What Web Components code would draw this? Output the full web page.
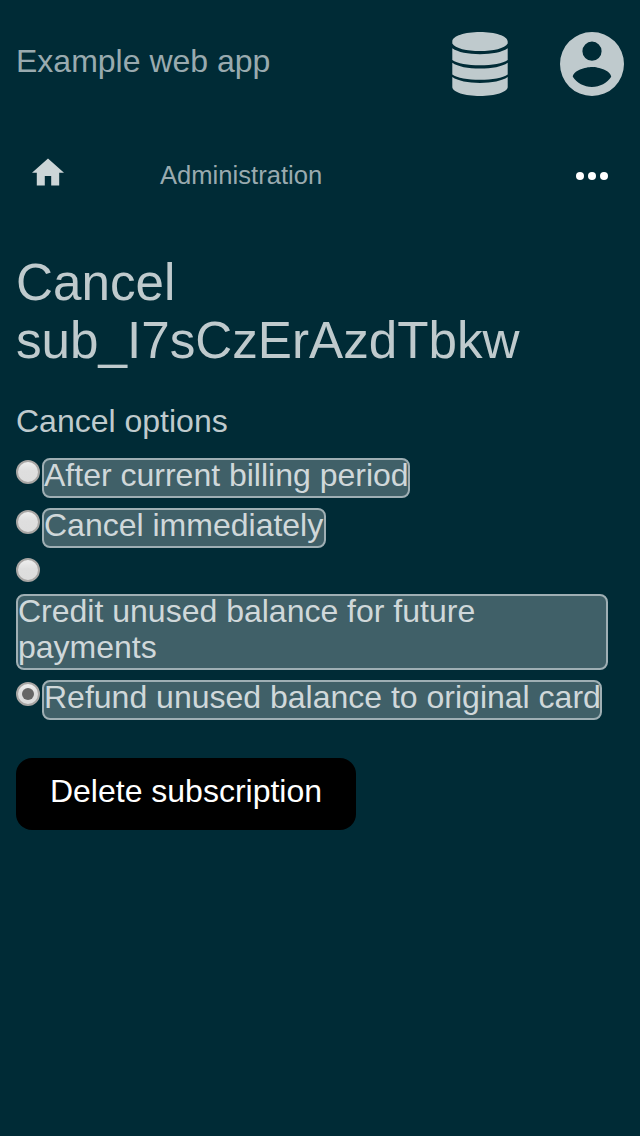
<!DOCTYPE html>
<html lang="en">
<head>
<meta charset="utf-8">
<title>Example web app</title>
<style>
body{margin:0;background:#002b36;color:#bfcacd;font-family:"Liberation Sans",Arial,sans-serif;font-size:32px;line-height:36px}
</style>
</head>
<body>
<app-page>
  <app-header slot="header">Example web app</app-header>
  <app-nav slot="nav">Administration</app-nav>
  <cancel-form>
    <span slot="title">Cancel sub_I7sCzErAzdTbkw</span>
    <span slot="legend">Cancel options</span>
    <radio-option style="--label-width:368px">After current billing period</radio-option>
    <radio-option style="--label-width:284px">Cancel immediately</radio-option>
    <radio-option stacked>Credit unused balance for future payments</radio-option>
    <radio-option checked style="--label-width:560px">Refund unused balance to original card</radio-option>
    <action-button slot="action">Delete subscription</action-button>
  </cancel-form>
</app-page>
<script>
const define = (name, html) => customElements.define(name, class extends HTMLElement {
  constructor() {
    super();
    this.attachShadow({mode: 'open'}).innerHTML = html;
  }
});

define('app-page', `
<style>:host{display:flex;flex-direction:column;min-height:1136px}</style>
<slot name="header"></slot><slot name="nav"></slot><main><slot></slot></main>`);

define('app-header', `
<style>
:host{display:flex;align-items:center;justify-content:space-between;height:128px;padding:0 16px;box-sizing:border-box}
.title{color:#99aaaf;padding-bottom:6px}
.icons{display:flex;gap:52px}
svg{display:block;fill:#bfcacd}
</style>
<span class="title"><slot></slot></span>
<div class="icons">
<svg width="56" height="64" viewBox="0 0 56 64"><path d="M28 0C43 0 55.7 4 55.7 9.5V11.5C53 16.5 41 19 28 19S3 16.5 .3 11.5V9.5C.3 4 13 0 28 0zM.3 16.3C6 20.3 16 22.2 28 22.2S50 20.3 55.7 16.3V28C51 31.5 40 33.3 28 33.3S5 31.5 .3 28zM.3 30.7C6 34.7 16 36.5 28 36.5S50 34.7 55.7 30.7V42.4C51 45.9 40 47.7 28 47.7S5 45.9 .3 42.4zM.3 45.1C6 49.1 16 50.9 28 50.9S50 49.1 55.7 45.1V55C55.7 60 43 64 28 64S.3 60 .3 55z"/></svg>
<svg width="64" height="64" viewBox="2 2 20 20"><path fill-rule="evenodd" d="M12 19.2C9.5 19.2 7.29 17.92 6 16C6.03 14 10 12.9 12 12.9C14 12.9 17.97 14 18 16C16.71 17.92 14.5 19.2 12 19.2M12 5A3 3 0 0 1 15 8A3 3 0 0 1 12 11A3 3 0 0 1 9 8A3 3 0 0 1 12 5M12 2A10 10 0 0 0 2 12A10 10 0 0 0 12 22A10 10 0 0 0 22 12A10 10 0 0 0 12 2Z"/></svg>
</div>`);

define('app-nav', `
<style>
:host{display:flex;align-items:center;height:96px;padding:0 32px;box-sizing:border-box;font-size:25.6px;color:#99aaaf}
svg{display:block}
span{padding-bottom:2px}
.home{margin:-8px 96px 0 0;fill:#ccd5d7}
.more{margin-left:auto;fill:#fff}
</style>
<svg class="home" width="32" height="28" viewBox="2 2.75 20 17.5"><path d="M10 20v-6h4v6h5v-8h3L12 3 2 12h3v8z"/></svg>
<span><slot></slot></span>
<svg class="more" width="32" height="8" viewBox="0 0 32 8"><circle cx="4" cy="4" r="4"/><circle cx="16" cy="4" r="4"/><circle cx="28" cy="4" r="4"/></svg>`);

define('cancel-form', `
<style>
:host{display:block;padding:30px 32px 0 16px}
h1{margin:0;font-size:51.2px;line-height:58px;font-weight:400}
.legend{margin-top:33px}
.options{display:flex;flex-direction:column;gap:10px;margin-top:19px}
.action{display:flex;margin-top:38px}
</style>
<h1><slot name="title"></slot></h1>
<div class="legend"><slot name="legend"></slot></div>
<div class="options"><slot></slot></div>
<div class="action"><slot name="action"></slot></div>`);

define('radio-option', `
<style>
:host{display:flex;align-items:flex-start;gap:2px;color:#d0d8da}
:host([stacked]){flex-direction:column;gap:12px}
i{flex:none;display:flex;align-items:center;justify-content:center;box-sizing:border-box;width:24px;height:24px;margin-top:2px;border:2px solid #a8a6a4;border-radius:50%;background:linear-gradient(#eee,#dedede 45%,#ddd)}
:host([stacked]) i{margin-top:0}
:host([checked]) i::after{content:"";width:12px;height:12px;border-radius:50%;background:#666}
.label{box-sizing:border-box;width:var(--label-width,auto);border:2px solid #9fafb4;border-radius:8px;background:#406068;white-space:nowrap}
:host([stacked]) .label{width:100%;white-space:normal}
.text{display:block;margin:-3px 0 3px}
</style>
<i></i><span class="label"><span class="text"><slot></slot></span></span>`);

define('action-button', `
<style>
:host{display:block}
button{display:block;width:340px;height:72px;border:0;border-radius:16px;padding:0 0 6px;background:#000;color:#fff;font:inherit}
</style>
<button type="button"><slot></slot></button>`);
</script>
</body>
</html>
